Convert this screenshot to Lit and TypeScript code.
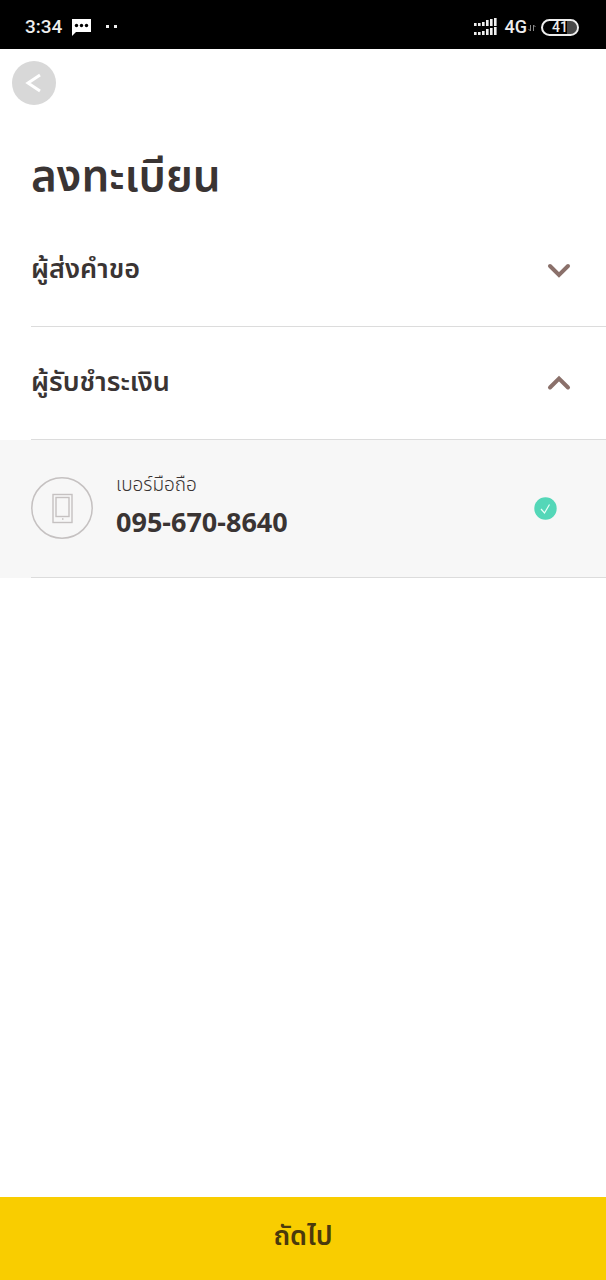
import { LitElement, html, css, svg } from "lit";
import { customElement, property, state } from "lit/decorators.js";

@customElement("status-bar")
class StatusBar extends LitElement {
  static styles = css`
    :host {
      display: flex;
      align-items: center;
      justify-content: space-between;
      height: 49px;
      padding: 5px 27px 0 25px;
      box-sizing: border-box;
      background: #000;
      color: #eee;
      font: 500 19px/24px Roboto, sans-serif;
    }
    .group {
      display: flex;
      align-items: center;
    }
    .notices {
      gap: 10px;
    }
    .network {
      margin-left: 7px;
      font-size: 18px;
    }
    .battery {
      display: flex;
      align-items: center;
      justify-content: center;
      width: 38px;
      height: 17px;
      margin-left: 5px;
      box-sizing: border-box;
      border: 2px solid #eee;
      border-radius: 9px;
      background: linear-gradient(90deg, #000 70%, #484848 70%) padding-box;
      font-size: 14px;
      line-height: 13px;
    }
    svg {
      display: block;
    }
  `;

  render() {
    const bars = [3, 3, 4, 6, 7, 8];
    return html`
      <div class="group notices">
        <span>3:34</span>
        <svg width="19" height="18" viewBox="0 0 19 18">
          <path d="M0 1H19V14H4L0 18Z" fill="#fff" />
          <circle cx="4.5" cy="7.5" r="1.7" /><circle cx="9.5" cy="7.5" r="1.7" /><circle cx="14.5" cy="7.5" r="1.7" />
        </svg>
        <svg width="20" height="4" viewBox="0 0 20 4">
          <path d="M5 0h3v3H5zM13 0h3v3h-3z" fill="#eee" />
        </svg>
      </div>
      <div class="group">
        <svg width="24" height="18" viewBox="0 0 24 18">
          ${bars.map(
            (h, i) => svg`
              <rect x=${i * 4} y=${8 - h} width="2.6" height=${h} fill="#eee" />
              <rect x=${i * 4} y=${17 - h} width="2.6" height=${h} fill="#eee" />`
          )}
        </svg>
        <span class="network">4G</span>
        <svg width="9" height="10" viewBox="0 0 9 10">
          <path d="M3.5 3V9L1.5 7M6.5 9V3L8.5 5" fill="none" stroke="#888" />
        </svg>
        <span class="battery">41</span>
      </div>
    `;
  }
}

@customElement("accordion-section")
class AccordionSection extends LitElement {
  @property() heading = "";
  @property({ type: Boolean }) open = false;

  static styles = css`
    :host {
      display: block;
    }
    h2 {
      margin: 0 0 0 31px;
      border-bottom: 1px solid #dcdcdc;
      font: inherit;
    }
    button {
      display: flex;
      align-items: center;
      justify-content: space-between;
      width: 100%;
      height: 112px;
      padding: 0 35px 0 0;
      border: 0;
      background: none;
      color: #3a3433;
      font: inherit;
      font-size: 27px;
      font-weight: 600;
      line-height: 40px;
      text-align: left;
      cursor: pointer;
    }
    svg {
      display: block;
    }
  `;

  render() {
    return html`
      <h2>
        <button aria-expanded=${this.open} @click=${() => (this.open = !this.open)}>
          <span>${this.heading}</span>
          <svg width="24" height="16" viewBox="0 0 24 16">
            <path
              d=${this.open ? "M3 12.5 12 3.5 21 12.5" : "M3 4 12 13 21 4"}
              fill="none" stroke="#8a706a" stroke-width="4" stroke-linecap="round"
            />
          </svg>
        </button>
      </h2>
      ${this.open ? html`<slot></slot>` : null}
    `;
  }
}

@customElement("app-root")
class AppRoot extends LitElement {
  @state() private phone = "095-670-8640";

  static styles = css`
    :host {
      display: flex;
      flex-direction: column;
      min-height: 100vh;
      background: #fff;
      color: #3a3433;
      font-family: "Noto Sans Thai", "Noto Sans", "Open Sans", sans-serif;
    }
    .back {
      display: block;
      width: 44px;
      height: 44px;
      margin: 12px 12px 0;
      padding: 0;
      border: 0;
      border-radius: 50%;
      background: #d8d8d8;
      cursor: pointer;
    }
    svg {
      display: block;
    }
    main {
      flex: 1;
    }
    h1 {
      margin: 38px 31px 1px;
      font-size: 44px;
      font-weight: 600;
      line-height: 70px;
    }
    .entry {
      background: linear-gradient(#dcdcdc, #dcdcdc) 31px 100% / 100% 1px no-repeat #f7f7f7;
      display: flex;
      align-items: center;
      gap: 23px;
      height: 138px;
      padding: 0 49px 2px 31px;
      box-sizing: border-box;
    }
    .details {
      flex: 1;
      padding-bottom: 4px;
    }
    .label {
      font-size: 19px;
      font-weight: 300;
      line-height: 32px;
    }
    .number {
      font: 700 27px/40px "Noto Sans", sans-serif;
    }
    .next {
      height: 83px;
      padding: 0 0 4px;
      border: 0;
      background: #f9cd00;
      color: #4b3a0c;
      font: inherit;
      font-size: 27px;
      font-weight: 600;
      cursor: pointer;
    }
  `;

  render() {
    return html`
      <status-bar></status-bar>
      <main>
        <button class="back" aria-label="กลับ">
          <svg width="44" height="44" viewBox="0 0 44 44">
            <path d="M28 14 16 22 28 30" fill="none" stroke="#fff" stroke-width="3" />
          </svg>
        </button>
        <h1>ลงทะเบียน</h1>
        <accordion-section heading="ผู้ส่งคำขอ"></accordion-section>
        <accordion-section heading="ผู้รับชำระเงิน" open>
          <div class="entry">
            <svg width="62" height="62" viewBox="0 0 62 62" fill="none" stroke="#c5c1c1">
              <circle cx="31" cy="31" r="30.2" stroke-width="1.5" />
              <rect x="22" y="17.5" width="19" height="28" stroke-width="1.4" />
              <rect x="25" y="20.5" width="13" height="19" stroke-width="1.4" />
              <path d="M31 42h1.5" stroke-width="1.5" />
            </svg>
            <div class="details">
              <div class="label">เบอร์มือถือ</div>
              <div class="number">${this.phone}</div>
            </div>
            <svg width="23" height="23" viewBox="0 0 23 23">
              <circle cx="11.5" cy="11.5" r="11.2" fill="#54d7b8" />
              <path d="M7 12 10.5 16 15.5 7.5" fill="none" stroke="#e8fff8" stroke-width="1.2" />
            </svg>
          </div>
        </accordion-section>
      </main>
      <button class="next">ถัดไป</button>
    `;
  }
}
